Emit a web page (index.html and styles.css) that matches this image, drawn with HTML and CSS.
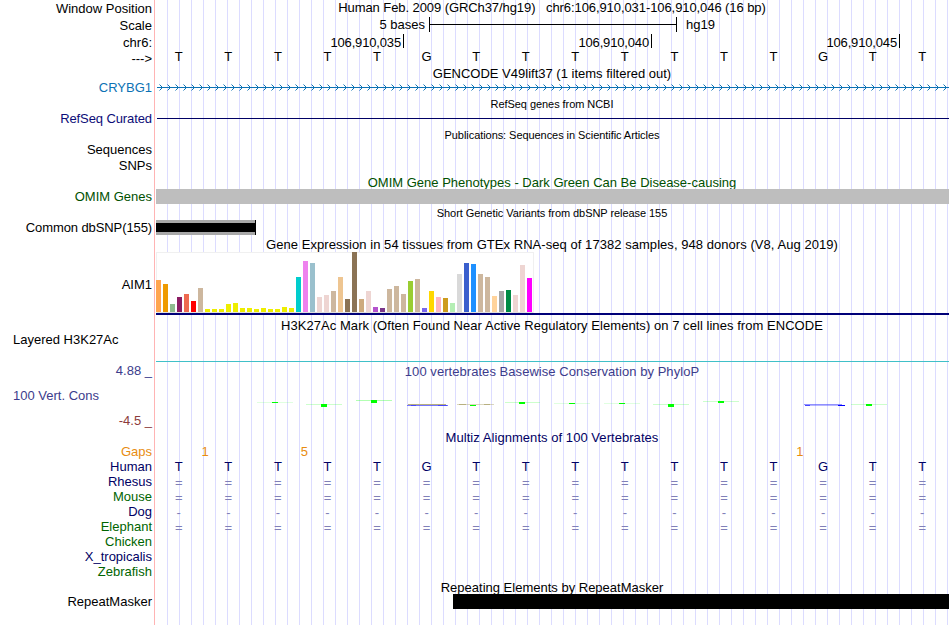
FILE: index.html
```
<!DOCTYPE html>
<html lang="en">
<head>
    <meta charset="UTF-8">
    <title>Human chr6:106,910,031-106,910,046 - Genome Browser</title>
    <link rel="stylesheet" href="styles.css">
</head>
<body>
    <div class="browser">
        <div class="track position">
            <div class="label">Window Position</div>
            <div class="title">Human Feb. 2009 (GRCh37/hg19) &nbsp; chr6:106,910,031-106,910,046 (16 bp)</div>
        </div>
        <div class="track scale">
            <div class="label">Scale</div>
            <div class="data">
                <span class="bases-text">5 bases</span>
                <span class="scale-bar"></span>
                <span class="assembly">hg19</span>
            </div>
        </div>
        <div class="track coords">
            <div class="label">chr6:</div>
            <div class="data">
                <span>106,910,035</span>
                <span>106,910,040</span>
                <span>106,910,045</span>
            </div>
        </div>
        <div class="track sequence">
            <div class="label">---&gt;</div>
            <div class="data bases" data-seq="TTTTTGTTTTTTTGTT"></div>
        </div>

        <div class="track">
            <div class="title">GENCODE V49lift37 (1 items filtered out)</div>
            <div class="label blue">CRYBG1</div>
            <svg class="data" width="794" height="15">
                <defs>
                    <pattern id="arrows" x="3" y="0" width="8" height="15" patternUnits="userSpaceOnUse">
                        <path d="M1.5 4.5 L4.5 7.5 L1.5 10.5" fill="none" stroke="#0c72b4" stroke-width="1"/>
                    </pattern>
                </defs>
                <rect x="3" y="0" width="791" height="15" fill="url(#arrows)"/>
                <rect x="2" y="7" width="792" height="1" fill="#0c72b4"/>
            </svg>
        </div>

        <div class="track">
            <div class="title small">RefSeq genes from NCBI</div>
            <div class="label darkblue tight">RefSeq Curated</div>
            <div class="data"><div class="refseq-line"></div></div>
        </div>

        <div class="track publications">
            <div class="title small">Publications: Sequences in Scientific Articles</div>
            <div class="label">Sequences</div>
            <div class="label">SNPs</div>
        </div>

        <div class="track">
            <div class="title green">OMIM Gene Phenotypes - Dark Green Can Be Disease-causing</div>
            <div class="label green">OMIM Genes</div>
            <div class="data"><div class="omim-bar"></div></div>
        </div>

        <div class="track">
            <div class="title small">Short Genetic Variants from dbSNP release 155</div>
            <div class="label tight">Common dbSNP(155)</div>
            <div class="data"><div class="snp-bar"></div></div>
        </div>

        <div class="track gtex">
            <div class="title wide">Gene Expression in 54 tissues from GTEx RNA-seq of 17382 samples, 948 donors (V8, Aug 2019)</div>
            <div class="label">AIM1</div>
            <div class="data">
                <div class="chart" id="chart"></div>
                <div class="gene-model"></div>
            </div>
        </div>

        <div class="track h3k27">
            <div class="title wide">H3K27Ac Mark (Often Found Near Active Regulatory Elements) on 7 cell lines from ENCODE</div>
            <div class="label left">Layered H3K27Ac</div>
            <div class="data"><div class="signal"></div></div>
        </div>

        <div class="track cons">
            <div class="cons-labels">
                <span class="max">4.88 _</span>
                <span class="name">100 Vert. Cons</span>
                <span class="min">-4.5 _</span>
            </div>
            <div class="cons-data">
                <div class="title slate wide">100 vertebrates Basewise Conservation by PhyloP</div>
                <svg class="logo" width="794" height="20" viewBox="155 395 794 20" shape-rendering="crispEdges">
                    <g fill="#00ff00" fill-opacity="0.2">
                        <rect x="257" y="402" width="36" height="1" fill-opacity="0.12"/>
                        <rect x="306" y="404" width="36" height="1"/>
                        <rect x="356" y="400" width="36" height="1" fill-opacity="0.3"/>
                        <rect x="505" y="402" width="35" height="1"/>
                        <rect x="554" y="403" width="36" height="1" fill-opacity="0.12"/>
                        <rect x="604" y="403" width="36" height="1" fill-opacity="0.12"/>
                        <rect x="653" y="404" width="36" height="1"/>
                        <rect x="703" y="401" width="36" height="1"/>
                        <rect x="851" y="404" width="36" height="1"/>
                    </g>
                    <g fill="#00ff00">
                        <rect x="272" y="402" width="6" height="1"/>
                        <rect x="321" y="404" width="6" height="3"/>
                        <rect x="371" y="400" width="6" height="3"/>
                        <rect x="470" y="405" width="6" height="1"/>
                        <rect x="519" y="402" width="6" height="2"/>
                        <rect x="569" y="403" width="6" height="1"/>
                        <rect x="619" y="403" width="6" height="1"/>
                        <rect x="668" y="404" width="6" height="3"/>
                        <rect x="718" y="401" width="6" height="2"/>
                        <rect x="866" y="404" width="6" height="2"/>
                    </g>
                    <g fill="#b8b080">
                        <rect x="408" y="404" width="38" height="1"/>
                        <rect x="457" y="404" width="37" height="1" fill-opacity="0.5"/>
                        <rect x="459" y="404" width="7" height="1"/>
                        <rect x="484" y="404" width="6" height="1"/>
                    </g>
                    <g fill="#4848ff">
                        <rect x="407" y="405" width="41" height="1" fill-opacity="0.75"/>
                        <rect x="411" y="405" width="5" height="1"/>
                        <rect x="438" y="405" width="9" height="1"/>
                        <rect x="804" y="404" width="38" height="1" fill-opacity="0.6"/>
                        <rect x="805" y="405" width="40" height="1" fill-opacity="0.4"/>
                        <rect x="805" y="405" width="5" height="1"/>
                        <rect x="838" y="405" width="7" height="1" fill="#0000ff"/>
                    </g>
                </svg>
            </div>
        </div>

        <div class="track multiz">
            <div class="title navy wide">Multiz Alignments of 100 Vertebrates</div>
            <div class="label orange">Gaps</div>
            <div class="data bases gaps" data-seq=" 1 5         1  "></div>
            <div class="label navy">Human</div>
            <div class="data bases navy" data-seq="TTTTTGTTTTTTTGTT"></div>
            <div class="label navy">Rhesus</div>
            <div class="data bases match" data-seq="================"></div>
            <div class="label forest">Mouse</div>
            <div class="data bases match" data-seq="================"></div>
            <div class="label navy">Dog</div>
            <div class="data bases match" data-seq="----------------"></div>
            <div class="label forest">Elephant</div>
            <div class="data bases match" data-seq="================"></div>
            <div class="label forest">Chicken</div>
            <div class="label navy">X_tropicalis</div>
            <div class="label forest">Zebrafish</div>
        </div>

        <div class="track repeats">
            <div class="title">Repeating Elements by RepeatMasker</div>
            <div class="label">RepeatMasker</div>
            <div class="data"><div class="repeat-bar"></div></div>
        </div>
    </div>

    <script>
        // one cell per base
        document.querySelectorAll(".bases").forEach(function (row) {
            row.dataset.seq.split("").forEach(function (base) {
                var cell = document.createElement("span");
                cell.textContent = base;
                row.appendChild(cell);
            });
        });

        // GTEx tissues: [height, color]
        var tissues = [
            [32, "#ffa54f"], [28, "#ee9a00"], [8, "#8fbc8f"], [15, "#8b1c62"], [18, "#ee6a50"],
            [11, "#ff0000"], [24, "#cdb79e"], [3, "#eeee00"], [3, "#eeee00"], [3, "#eeee00"],
            [8, "#eeee00"], [9, "#eeee00"], [4, "#eeee00"], [4, "#eeee00"], [3, "#eeee00"],
            [4, "#eeee00"], [3, "#eeee00"], [3, "#eeee00"], [5, "#eeee00"], [4, "#eeee00"],
            [35, "#00cdcd"], [51, "#ee82ee"], [49, "#9ac0cd"], [15, "#eed5d2"], [17, "#eed5d2"],
            [21, "#cdb79e"], [35, "#eec591"], [13, "#8b7355"], [60, "#8b7355"], [13, "#cdaa7d"],
            [21, "#eed5d2"], [5, "#b452cd"], [4, "#7a378b"], [23, "#cdb79e"], [26, "#cdb79e"],
            [18, "#cdb79e"], [31, "#9acd32"], [33, "#cdb79e"], [4, "#7a67ee"], [21, "#ffd700"],
            [15, "#ffb6c1"], [14, "#cd9b1d"], [9, "#b4eeb4"], [38, "#d9d9d9"], [49, "#3a5fcd"],
            [48, "#1e90ff"], [38, "#cdb79e"], [35, "#cdb79e"], [16, "#ffd39b"], [21, "#a6a6a6"],
            [22, "#008b45"], [17, "#eed5d2"], [47, "#eed5d2"], [34, "#ff00ff"]
        ];
        var chart = document.getElementById("chart");
        tissues.forEach(function (t) {
            var bar = document.createElement("i");
            bar.style.height = t[0] + "px";
            bar.style.backgroundColor = t[1];
            chart.appendChild(bar);
        });
    </script>
</body>
</html>
```
FILE: styles.css
```
body {
    margin: 0;
    background-color: white;
    color: black;
    font-family: "Liberation Sans", Arial, sans-serif;
    font-size: 13px;
}

.browser {
    width: 949px;
    height: 625px;
    overflow: hidden;
    background-image:
        linear-gradient(#ffb4b4, #ffb4b4),
        repeating-linear-gradient(to right, #dcdcff 0, #dcdcff 1px, transparent 1px, transparent 12px);
    background-repeat: no-repeat;
    background-size: 1px 100%, 782px 100%;
    background-position: 154px 0, 167px 0;
}

.track {
    display: grid;
    grid-template-columns: 152px 794px;
    column-gap: 3px;
    grid-template-rows: 16px;
    grid-auto-rows: 15px;
}

.label {
    grid-column: 1;
    text-align: right;
    line-height: 15px;
    white-space: nowrap;
}

.label.left {
    text-align: left;
    padding-left: 13px;
}

.label.tight {
    letter-spacing: -0.1px;
}

.title {
    grid-column: 2;
    text-align: center;
    line-height: 20px;
    white-space: nowrap;
}

.title.small {
    font-size: 11px;
    line-height: 18px;
    letter-spacing: -0.06px;
}

.title.wide {
    letter-spacing: 0.05px;
}

.data {
    grid-column: 2;
}

.blue { color: #0c72b4; }
.darkblue { color: #0c0c78; }
.navy { color: #000064; }
.green { color: #005000; }
.forest { color: #006400; }
.slate { color: #3c3c8c; }
.orange { color: #e88c10; }

/* header rows */
.position {
    grid-template-rows: 17px;
}

.position .label {
    line-height: 17px;
}

.position .title {
    line-height: 15px;
    letter-spacing: -0.08px;
}

.scale .label {
    line-height: 17px;
}

.scale .data {
    display: flex;
    line-height: 15px;
}

.bases-text {
    width: 270px;
    margin-right: 4px;
    text-align: right;
}

.scale-bar {
    width: 246px;
    height: 15px;
    border-left: 1px solid black;
    border-right: 1px solid black;
    background: linear-gradient(black, black) 0 7px / 100% 1px no-repeat;
}

.assembly {
    margin-left: 9px;
}

.coords {
    grid-template-rows: 17px;
}

.coords .label {
    line-height: 20px;
}

.coords .data {
    display: flex;
    padding: 1px 0 0 1px;
}

.coords .data span {
    width: 245px;
    height: 14px;
    padding-right: 2px;
    border-right: 1px solid black;
    text-align: right;
    line-height: 17px;
    letter-spacing: -0.16px;
}

.sequence {
    grid-template-rows: 14px;
}

.sequence .label {
    line-height: 17px;
}

.bases {
    display: grid;
    grid-template-columns: repeat(16, 1fr);
    width: 793px;
    margin-left: -1px;
    text-align: center;
    line-height: 14px;
}

.match {
    color: #8080b8;
    line-height: 15px;
}

.gaps {
    color: #e88c10;
    text-align: left;
    text-indent: -2px;
    line-height: 14px;
}

/* gene and variant tracks */
.refseq-line {
    height: 1px;
    margin: 7px 0 0 2px;
    background-color: #000064;
}

.publications {
    grid-template-rows: 16px 16px 15px;
}

.omim-bar {
    height: 15px;
    margin-left: 1px;
    background-color: #bebebe;
}

.snp-bar {
    box-sizing: border-box;
    width: 99px;
    height: 15px;
    margin-left: 1px;
    border: solid #a8a8a8;
    border-width: 3px 0;
    background-color: black;
    box-shadow: 1px 0 black;
}

.gtex {
    grid-template-rows: 16px 65px;
}

.gtex .label {
    line-height: 67px;
}

.chart {
    display: flex;
    align-items: flex-end;
    gap: 2px;
    box-sizing: border-box;
    width: 378px;
    height: 61px;
    margin: 1px 0 0 1px;
    background-color: white;
    box-shadow: inset 0 1px #f0f0f0, inset -1px 0 #f0f0f0, inset 1px 0 #f0f0f0, inset 0 -1px #e0e0e0;
    padding-bottom: 1px;
}

.chart i {
    width: 5px;
}

.gene-model {
    height: 2px;
    margin-left: 1px;
    background-color: #000078;
}

.h3k27 {
    grid-template-rows: 16px 31px;
}

.signal {
    height: 1px;
    margin: 29px 0 0 1px;
    background-color: #40c0c8;
}

/* conservation */
.cons {
    grid-template-rows: 66px;
}

.cons-labels {
    display: flex;
    flex-direction: column;
    line-height: 15px;
    text-align: right;
    color: #3c3c8c;
}

.cons-labels .name {
    margin: 10px 0;
    padding-left: 13px;
    text-align: left;
}

.cons-labels .min {
    color: #8c3c3c;
}

.cons-data .title {
    line-height: 18px;
}

.logo {
    display: block;
    margin-top: 14px;
}

.multiz .title {
    line-height: 18px;
}

.multiz .label {
    line-height: 14px;
}

.repeats {
    grid-template-rows: 14px 15px;
}

.repeats .title {
    line-height: 16px;
}

.repeat-bar {
    height: 15px;
    margin-left: 298px;
    background-color: black;
}
```
